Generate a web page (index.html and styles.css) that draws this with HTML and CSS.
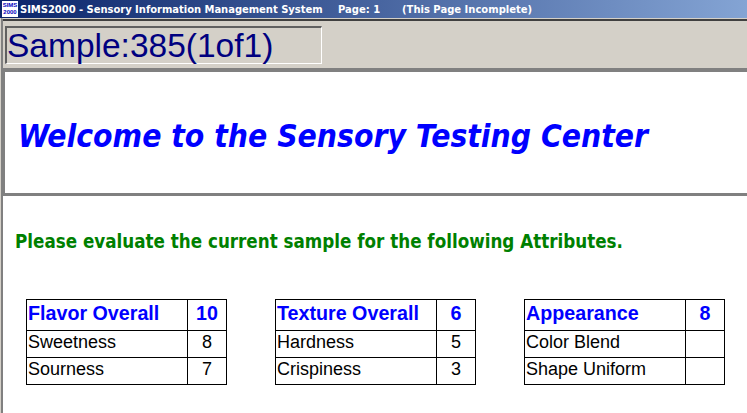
FILE: index.html
```html
<!DOCTYPE html>
<html lang="en">

<head>
    <meta charset="UTF-8">
    <title>SIMS2000 - Sensory Information Management System</title>
    <link rel="stylesheet" href="styles.css">
</head>

<body>
    <div class="title-bar">
        <div class="app-icon"><span>SIMS</span><span>2000</span></div>
        <span class="app-name">SIMS2000 - Sensory Information Management System</span>
        <span class="page-no">Page: 1</span>
        <span class="page-state">(This Page Incomplete)</span>
    </div>

    <div class="window">
        <div class="sample-panel">
            <div class="sample-box">Sample:385(1of1)</div>
        </div>

        <div class="welcome-panel">
            <h1>Welcome to the Sensory Testing Center</h1>
        </div>

        <div class="content">
            <p class="prompt">Please evaluate the current sample for the following Attributes.</p>

            <div class="attributes">
                <table>
                    <tr class="head"><td>Flavor Overall</td><td class="score">10</td></tr>
                    <tr><td>Sweetness</td><td class="score">8</td></tr>
                    <tr><td>Sourness</td><td class="score">7</td></tr>
                </table>

                <table>
                    <tr class="head"><td>Texture Overall</td><td class="score">6</td></tr>
                    <tr><td>Hardness</td><td class="score">5</td></tr>
                    <tr><td>Crispiness</td><td class="score">3</td></tr>
                </table>

                <table>
                    <tr class="head"><td>Appearance</td><td class="score">8</td></tr>
                    <tr><td>Color Blend</td><td class="score"></td></tr>
                    <tr><td>Shape Uniform</td><td class="score"></td></tr>
                </table>
            </div>
        </div>
    </div>
</body>

</html>
```

FILE: styles.css
```css
html, body {
    height: 100%;
}

body {
    margin: 0;
    overflow: hidden;
    background-color: #FFFFFF;
    font-family: 'Liberation Sans', Arial, sans-serif;
}

.title-bar {
    display: flex;
    align-items: center;
    height: 18px;
    background: linear-gradient(to right, #0A246A, #84A4D4);
    color: #FFFFFF;
    font-family: 'DejaVu Sans', sans-serif;
    font-size: 10px;
    font-weight: bold;
    white-space: nowrap;
}

.app-icon {
    display: flex;
    flex-direction: column;
    justify-content: center;
    width: 16px;
    height: 16px;
    margin: 0 2px;
    background-color: #FFFFFF;
    color: #0000C0;
    font-family: 'Liberation Sans', sans-serif;
    font-size: 6px;
    font-weight: bold;
    line-height: 7px;
    text-align: center;
    overflow: hidden;
}

.app-name {
    width: 318px;
    letter-spacing: -0.04px;
}

.page-no {
    width: 64px;
}

.window {
    border-left: 1px solid #D4D0C8;
}

.sample-panel {
    height: 50px;
    padding: 7px 0 0 2px;
    box-sizing: border-box;
    background-color: #D4D0C8;
    border-top: 1px solid #D4D0C8;
    border-left: 2px solid #808080;
    box-shadow: inset 0 2px 0 #404040;
}

.sample-box {
    width: 317px;
    height: 38px;
    box-sizing: border-box;
    border: 1px solid;
    border-width: 2px 1px 1px 2px;
    border-color: #606060 #FFFFFF #FFFFFF #606060;
    color: #000080;
    font-size: 33.5px;
    line-height: 36px;
}

.welcome-panel {
    display: flex;
    align-items: center;
    height: 128px;
    box-sizing: border-box;
    border-top: 4px solid #808080;
    border-bottom: 3px solid #808080;
    border-left: 4px solid #808080;
    padding: 6px 0 0 13px;
}

h1 {
    margin: 0;
    color: #0000FF;
    font-family: 'DejaVu Sans', sans-serif;
    font-size: 31.55px;
    font-stretch: condensed;
    font-style: italic;
    font-weight: bold;
    white-space: nowrap;
}

.content {
    height: 217px;
    padding: 36px 0 0 14px;
    box-sizing: border-box;
    border-left: 2px solid #808080;
}

.prompt {
    margin: 0 0 47px -2px;
    color: #008000;
    font-family: 'DejaVu Sans', sans-serif;
    font-size: 18.65px;
    font-stretch: condensed;
    font-weight: bold;
    line-height: 20px;
    white-space: nowrap;
}

.attributes {
    display: flex;
    gap: 48px;
    margin-left: 9px;
}

table {
    width: 201px;
    border-collapse: collapse;
    table-layout: fixed;
    font-size: 18px;
}

td {
    border: 1px solid #000000;
    height: 27px;
    padding: 0 0 3px 1px;
    box-sizing: border-box;
    color: #000000;
    white-space: nowrap;
}

.head td {
    height: 31px;
    color: #0000FF;
    font-size: 19.7px;
    font-weight: bold;
}

td.score {
    width: 39px;
    padding: 0 0 3px;
    text-align: center;
}
```
